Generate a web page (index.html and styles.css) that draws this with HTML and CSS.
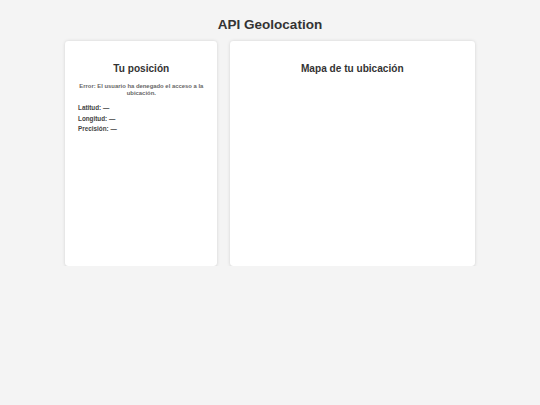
FILE: index.html
```html
<!DOCTYPE html>
<html lang="es">
<head>
<meta charset="utf-8">
<title>API Geolocation</title>
<link rel="stylesheet" href="styles.css">
</head>
<body>
  <h1 class="title">API Geolocation</h1>
  <main class="layout">
    <section class="card info">
      <h2 class="card-title">Tu posición</h2>
      <p class="error">Error: El usuario ha denegado el acceso a la ubicación.</p>
      <div class="coords">
        <p class="coord"><strong>Latitud:</strong> —</p>
        <p class="coord"><strong>Longitud:</strong> —</p>
        <p class="coord"><strong>Precisión:</strong> —</p>
      </div>
    </section>
    <section class="card map">
      <h2 class="card-title">Mapa de tu ubicación</h2>
    </section>
  </main>
</body>
</html>
```

FILE: styles.css
```css
html, body {
  margin: 0;
  padding: 0;
}
body {
  background: #f4f4f4;
  font-family: "Liberation Sans", Arial, sans-serif;
  color: #333;
  padding-top: 16.6px;
}
.title {
  margin: 0 0 9px;
  text-align: center;
  font-size: 13.5px;
  line-height: 15.5px;
  font-weight: bold;
  color: #333;
}
.layout {
  display: flex;
  justify-content: center;
  gap: 12.7px;
}
.card {
  background: #fff;
  border-radius: 3.4px;
  box-shadow: 0 0.8px 3.4px rgba(0, 0, 0, 0.14);
  padding: 13.6px 12.66px 12.66px;
  box-sizing: border-box;
  height: 224.8px;
}
.info {
  width: 151.9px;
}
.map {
  width: 244.7px;
}
.card-title {
  margin: 8.4px 0;
  text-align: center;
  font-size: 10.1px;
  line-height: 11.6px;
  font-weight: bold;
  color: #333;
}
.error {
  margin: 0 0 6.5px;
  text-align: center;
  font-size: 5.9px;
  line-height: 7.1px;
  font-weight: bold;
  color: #666;
}
.coords {
  display: flex;
  flex-direction: column;
  gap: 3.5px;
}
.coord {
  margin: 0;
  font-size: 6.33px;
  line-height: 7.3px;
  font-weight: bold;
  color: #444;
}
```
